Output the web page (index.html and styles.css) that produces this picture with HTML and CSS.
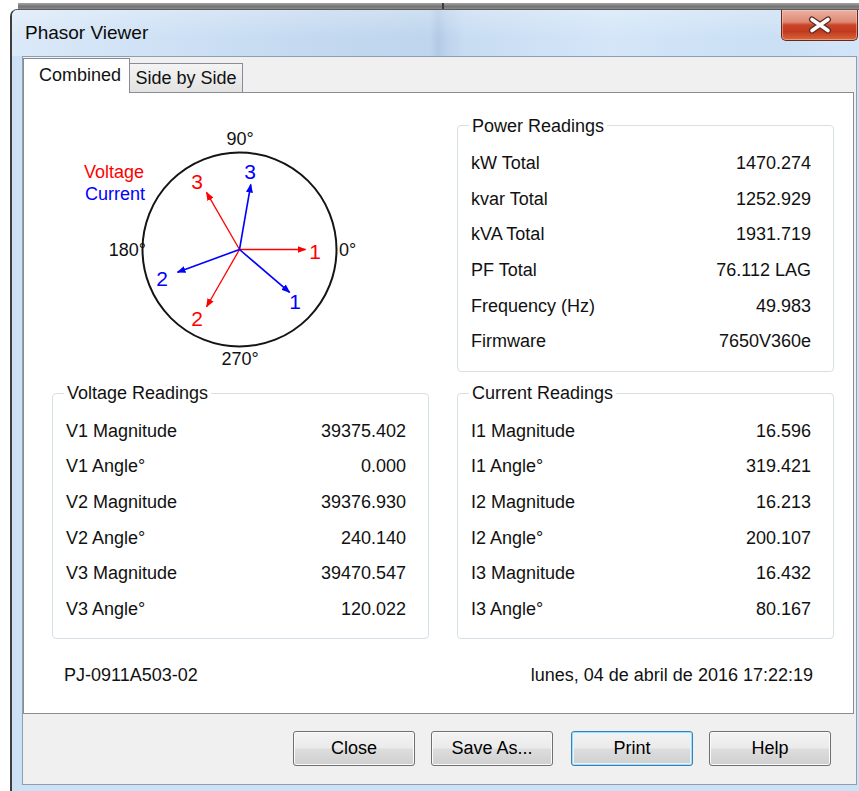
FILE: index.html
```html
<!DOCTYPE html>
<html lang="en">
<head>
<meta charset="utf-8">
<title>Phasor Viewer</title>
<link rel="stylesheet" href="styles.css">
</head>
<body>
<div class="frame-edge"><span class="edge-tick"></span></div>
<div class="window">
  <div class="titlebar">
    <span class="title">Phasor Viewer</span>
    <button class="close-btn" aria-label="Close">
      <svg width="26" height="18" viewBox="0 0 26 18">
        <path d="M5,3.5 L21,14.5 M21,3.5 L5,14.5" stroke="#5b2a22" stroke-width="6" stroke-linecap="round" fill="none"/>
        <path d="M5,3.5 L21,14.5 M21,3.5 L5,14.5" stroke="#ffffff" stroke-width="3.6" stroke-linecap="round" fill="none"/>
      </svg>
    </button>
  </div>

  <div class="client">
    <div class="tabstrip">
      <div class="tab active">Combined</div>
      <div class="tab">Side by Side</div>
    </div>

    <div class="tabpanel">
      <div class="phasor">
        <svg width="377" height="256" viewBox="0 0 377 256">
          <defs>
            <marker id="head-red" markerUnits="userSpaceOnUse" markerWidth="9" markerHeight="7" refX="8" refY="3.5" orient="auto">
              <path d="M0,0 L9,3.5 L0,7 z" fill="#ff0000"/>
            </marker>
            <marker id="head-blue" markerUnits="userSpaceOnUse" markerWidth="9" markerHeight="7" refX="8" refY="3.5" orient="auto">
              <path d="M0,0 L9,3.5 L0,7 z" fill="#0000ff"/>
            </marker>
          </defs>

          <circle cx="187.5" cy="133.5" r="97" fill="none" stroke="#141414" stroke-width="2"/>

          <g class="deg">
            <text x="188" y="22.5" text-anchor="middle">90°</text>
            <text x="188" y="242.5" text-anchor="middle">270°</text>
            <text x="94" y="134" text-anchor="end">180°</text>
            <text x="287" y="134" text-anchor="start">0°</text>
          </g>

          <text class="legend-v" x="32" y="56">Voltage</text>
          <text class="legend-i" x="33" y="78">Current</text>

          <!-- voltage phasors -->
          <g stroke="#ff0000" stroke-width="1.3" marker-end="url(#head-red)">
            <line x1="187.5" y1="133.5" x2="253.5" y2="133.5"/>
            <line x1="187.5" y1="133.5" x2="154.6" y2="190.7"/>
            <line x1="187.5" y1="133.5" x2="154.5" y2="76.4"/>
          </g>
          <!-- current phasors -->
          <g stroke="#0000ff" stroke-width="1.6" marker-end="url(#head-blue)">
            <line x1="187.5" y1="133.5" x2="237.6" y2="176.4"/>
            <line x1="187.5" y1="133.5" x2="125.5" y2="156.2"/>
            <line x1="187.5" y1="133.5" x2="198.8" y2="68.5"/>
          </g>

          <g class="num red">
            <text x="263" y="135">1</text>
            <text x="145" y="202">2</text>
            <text x="145" y="65">3</text>
          </g>
          <g class="num blue">
            <text x="243" y="185">1</text>
            <text x="110" y="162">2</text>
            <text x="198" y="55">3</text>
          </g>
        </svg>
      </div>

      <fieldset class="group">
        <legend>Power Readings</legend>
        <div class="rows">
          <span>kW Total</span><span class="val">1470.274</span>
          <span>kvar Total</span><span class="val">1252.929</span>
          <span>kVA Total</span><span class="val">1931.719</span>
          <span>PF Total</span><span class="val">76.112 LAG</span>
          <span>Frequency (Hz)</span><span class="val">49.983</span>
          <span>Firmware</span><span class="val">7650V360e</span>
        </div>
      </fieldset>

      <fieldset class="group">
        <legend>Voltage Readings</legend>
        <div class="rows">
          <span>V1 Magnitude</span><span class="val">39375.402</span>
          <span>V1 Angle°</span><span class="val">0.000</span>
          <span>V2 Magnitude</span><span class="val">39376.930</span>
          <span>V2 Angle°</span><span class="val">240.140</span>
          <span>V3 Magnitude</span><span class="val">39470.547</span>
          <span>V3 Angle°</span><span class="val">120.022</span>
        </div>
      </fieldset>

      <fieldset class="group">
        <legend>Current Readings</legend>
        <div class="rows">
          <span>I1 Magnitude</span><span class="val">16.596</span>
          <span>I1 Angle°</span><span class="val">319.421</span>
          <span>I2 Magnitude</span><span class="val">16.213</span>
          <span>I2 Angle°</span><span class="val">200.107</span>
          <span>I3 Magnitude</span><span class="val">16.432</span>
          <span>I3 Angle°</span><span class="val">80.167</span>
        </div>
      </fieldset>

      <div class="footer">
        <span>PJ-0911A503-02</span>
        <span>lunes, 04 de abril de 2016 17:22:19</span>
      </div>
    </div>

    <div class="buttons">
      <button class="btn">Close</button>
      <button class="btn save">Save As...</button>
      <button class="btn default">Print</button>
      <button class="btn">Help</button>
    </div>
  </div>
</div>
</body>
</html>
```

FILE: styles.css
```css
html, body {
  margin: 0;
  padding: 0;
}

body {
  width: 859px;
  height: 791px;
  overflow: hidden;
  background: #ffffff;
  font-family: "Liberation Sans", Arial, sans-serif;
  color: #111;
}

/* dark strip of the frame above the dialog */
.frame-edge {
  position: relative;
  margin: 3px 0 0 18px;
  height: 6px;
  background: linear-gradient(#a3a3a3, #737373 60%, #8c8c8c);
}

.edge-tick {
  position: absolute;
  left: 424px;
  top: 0;
  width: 2px;
  height: 6px;
  background: #3c3c3c;
}

/* dialog window */
.window {
  box-sizing: border-box;
  margin-left: 10px;
  width: 849px;
  height: 782px;
  border-left: 2px solid #3e3e3e;
  border-top: 1px solid #5c5c5c;
  border-top-left-radius: 7px;
  background: #cde1f6;
  overflow: hidden;
}

.titlebar {
  height: 46px;
  display: flex;
  justify-content: space-between;
  align-items: flex-start;
  background:
    linear-gradient(rgba(255, 255, 255, 0.25), rgba(255, 255, 255, 0) 60%),
    linear-gradient(90deg, #dbe9f8 0px, #d1e3f6 110px, #c4d9f0 300px, #bed5ed 418px, #b2cae6 426px, #bdd3ec 434px, #c8dcf2 452px, #d4e6f8 600px, #cadff4 760px, #d3e5f8 849px);
}

.title {
  padding-left: 13px;
  line-height: 46px;
  font-size: 19px;
  color: #0b0b0b;
}

.close-btn {
  box-sizing: border-box;
  width: 77px;
  height: 31px;
  margin: 0 1px 0 0;
  padding: 0;
  border: 1px solid #6a2619;
  border-top: none;
  border-radius: 0 0 5px 5px;
  background: linear-gradient(#eab0a2 0%, #df8a76 40%, #c94528 50%, #c23a1e 72%, #d8673f 100%);
  box-shadow: inset 0 0 0 1px rgba(255, 220, 200, 0.45);
  display: flex;
  align-items: center;
  justify-content: center;
}

/* client area */
.client {
  box-sizing: border-box;
  margin: 0 2px 0 10px;
  height: 729px;
  border: 1px solid #8f9eae;
  background: #f0f0f0;
  display: flex;
  flex-direction: column;
}

.tabstrip {
  height: 35px;
  display: flex;
  align-items: flex-end;
  font-size: 18px;
}

.tab {
  box-sizing: border-box;
  height: 29px;
  width: 113px;
  border: 1px solid #898c95;
  border-left: none;
  border-bottom: none;
  background: linear-gradient(#f4f4f4, #e2e2e2);
  text-align: center;
  line-height: 29px;
}

.tab.active {
  position: relative;
  z-index: 1;
  width: 107px;
  height: 35px;
  margin-bottom: -1px;
  border-left: 1px solid #898c95;
  background: #ffffff;
  line-height: 32px;
  text-align: left;
  padding-left: 15px;
}

.tabpanel {
  box-sizing: border-box;
  height: 622px;
  margin-right: 2px;
  border: 1px solid #898c95;
  background: #ffffff;
  padding: 22.5px 19px 0 28px;
  display: grid;
  grid-template-columns: 377px 377px;
  grid-template-rows: 256px 255.5px auto;
  column-gap: 28px;
  row-gap: 11.5px;
  font-size: 18px;
}

.phasor svg {
  display: block;
}

.deg text {
  font-family: "Liberation Sans", Arial, sans-serif;
  font-size: 18px;
  fill: #111;
  dominant-baseline: central;
}

.legend-v,
.legend-i {
  font-family: "Liberation Sans", Arial, sans-serif;
  font-size: 18px;
  dominant-baseline: central;
}

.legend-v { fill: #ff0000; }
.legend-i { fill: #0000ff; }

.num text {
  font-family: "Liberation Sans", Arial, sans-serif;
  font-size: 21px;
  text-anchor: middle;
  dominant-baseline: central;
}

.num.red text { fill: #ff0000; }
.num.blue text { fill: #0000ff; }

/* group boxes */
.group {
  box-sizing: border-box;
  margin: 0;
  min-width: 0;
  border: 1px solid #d5dfe5;
  border-radius: 4px;
  padding: 10px 22px 0 13px;
}

.group legend {
  margin-left: -2px;
  padding: 0 3px;
  font-size: 18px;
  line-height: 20px;
}

.rows {
  display: grid;
  grid-template-columns: 1fr auto;
  grid-auto-rows: 35.6px;
  align-items: center;
  line-height: 20px;
}

.val {
  text-align: right;
}

.footer {
  grid-column: 1 / span 2;
  margin-top: 15px;
  display: flex;
  justify-content: space-between;
  padding: 0 21px 0 12px;
  line-height: 20px;
}

/* button row */
.buttons {
  flex: 1;
  display: flex;
  justify-content: flex-end;
  align-items: flex-start;
  gap: 16px;
  padding: 17px 25px 0 0;
}

.btn {
  box-sizing: border-box;
  width: 122px;
  height: 35px;
  margin: 0;
  padding: 0;
  border: 1px solid #707070;
  border-radius: 3px;
  background: linear-gradient(#f3f3f3 0%, #ebebeb 48%, #dddddd 52%, #cfcfcf 100%);
  box-shadow: inset 0 0 0 1px #fbfbfb;
  font-family: "Liberation Sans", Arial, sans-serif;
  font-size: 18px;
  color: #000;
}

.btn.save {
  margin-right: 2px;
}

.btn.default {
  border-color: #3c7fb1;
  box-shadow: inset 0 0 0 1px #9fdcf7, inset 0 0 0 2px #e6f5fc;
}
```
